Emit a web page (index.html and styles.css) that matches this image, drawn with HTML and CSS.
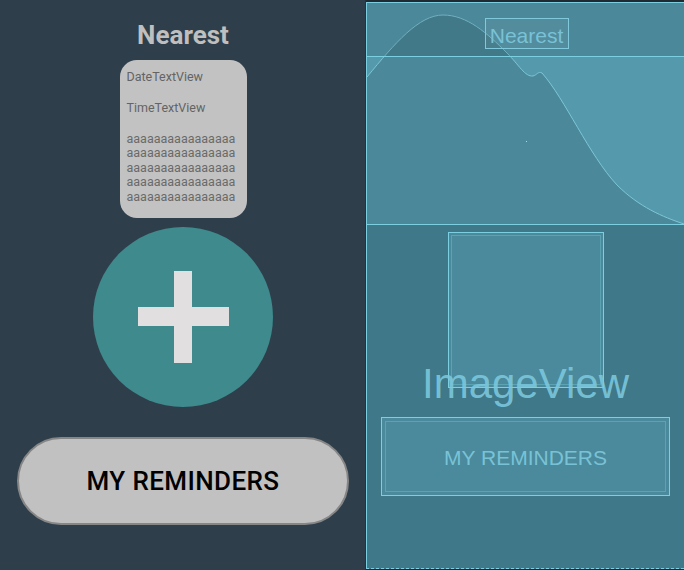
FILE: index.html
```html
<!DOCTYPE html>
<html lang="en">

<head>
  <meta charset="UTF-8">
  <meta name="viewport" content="width=device-width, initial-scale=1.0">
  <title>Nearest - layout preview</title>
  <link rel="stylesheet" href="styles.css">
</head>
<body>
  <div class="editor">

    <!-- design view -->
    <div class="design">
      <h1 class="title">Nearest</h1>
      <div class="card">
        <div class="card-line">DateTextView</div>
        <div class="card-line">TimeTextView</div>
        <div class="card-line card-body">aaaaaaaaaaaaaaaaaaaaaaaaaaaaaaaaaaaaaaaaaaaaaaaaaaaaaaaaaaaaaaaaaaaaaaaaaaaaaaaa</div>
      </div>
      <div class="fab">
        <svg width="180" height="180" viewBox="0 0 180 180">
          <rect x="45" y="80" width="91" height="19" fill="#e2dfe0" />
          <rect x="81" y="44" width="18" height="92" fill="#e2dfe0" />
        </svg>
      </div>
      <button class="reminders">MY REMINDERS</button>
    </div>

    <!-- blueprint view -->
    <div class="blueprint-wrap">
      <div class="blueprint">
        <div class="bp-top">
          <svg class="bp-curve" width="317" height="221" viewBox="0 0 317 221">
            <path d="M0,74 C28,40 52,12 76,12 C100,12 120,30 140,50 C152,62 158,74 166,73 C170,72 171,68 175,70 C198,96 222,152 250,182 C272,204 296,214 317,221 L0,221 Z"
              fill="rgba(0,0,0,0.11)" />
            <path d="M0,74 C28,40 52,12 76,12 C100,12 120,30 140,50 C152,62 158,74 166,73 C170,72 171,68 175,70 C198,96 222,152 250,182 C272,204 296,214 317,221"
              fill="none" stroke="#7cc6d8" stroke-width="1" />
          </svg>
          <div class="bp-band">
            <div class="bp-label">Nearest</div>
          </div>
          <span class="bp-dot"></span>
        </div>
        <div class="bp-bottom">
          <div class="bp-image"></div>
          <div class="bp-image-text">ImageView</div>
          <div class="bp-button">MY REMINDERS</div>
        </div>
      </div>
    </div>

  </div>
</body>
</html>
```

FILE: styles.css
```css
* {
  box-sizing: border-box;
}

body {
  margin: 0;
  background: #1f2a31;
}

.editor {
  display: flex;
  width: 684px;
  height: 570px;
  overflow: hidden;
}

/* design view */

.design {
  width: 366px;
  flex-shrink: 0;
  padding-left: 1px;
  background: #2e3e4b;
  border-right: 1px solid #26333d;
  display: flex;
  flex-direction: column;
  align-items: center;
  font-family: Roboto, "Liberation Sans", sans-serif;
}

.title {
  margin: 20px 0 0;
  font-size: 26px;
  line-height: 30px;
  font-weight: 700;
  color: #bfbfbf;
}

.card {
  margin-top: 10px;
  width: 127px;
  height: 158px;
  padding: 9.5px 7px 0;
  background: #c2c2c2;
  border-radius: 17px;
  color: #646464;
  font-size: 12.5px;
  line-height: 14.5px;
}

.card-line + .card-line {
  margin-top: 16.5px;
}

.card-body {
  width: 113px;
  word-break: break-all;
  color: #6a6a6a;
}

.fab {
  margin-top: 9px;
  width: 180px;
  height: 180px;
  border-radius: 50%;
  background: #3e8a8c;
}

.fab svg {
  display: block;
}

.reminders {
  margin-top: 30px;
  width: 332px;
  height: 88px;
  border: 2px solid #868686;
  border-radius: 44px;
  background: #c1c1c1;
  color: #000;
  font-family: Roboto, "Liberation Sans", sans-serif;
  font-size: 26px;
  font-weight: 500;
  letter-spacing: 0.4px;
  padding: 0;
}

/* blueprint view */

.blueprint-wrap {
  flex: 1;
  padding-top: 2px;
}

.blueprint {
  height: 567px;
  border-left: 1px solid #7ccfe0;
  border-top: 1px solid #7ccfe0;
  border-bottom: 1px dashed #7ccfe0;
  background: #3f7889;
  font-family: "Liberation Sans", Arial, sans-serif;
  color: #79c2d6;
}

.bp-top {
  position: relative;
  height: 222px;
  background: #5599ad;
  border-bottom: 1px solid #7ccfe0;
}

.bp-curve {
  position: absolute;
  left: 0;
  top: 0;
}

.bp-band {
  position: relative;
  height: 54px;
  background: rgba(0, 0, 0, 0.11);
  border-bottom: 1px solid #7ccfe0;
  display: flex;
  justify-content: center;
  padding: 15px 0 0 2px;
}

.bp-label {
  width: 84px;
  height: 31px;
  border: 1px solid #80c8dc;
  background: rgba(255, 255, 255, 0.04);
  font-size: 21px;
  line-height: 33px;
  text-align: center;
  overflow: hidden;
}

.bp-dot {
  position: absolute;
  left: 159px;
  top: 138px;
  width: 1px;
  height: 1px;
  background: #9fdcec;
}

.bp-bottom {
  display: flex;
  flex-direction: column;
  align-items: center;
  padding-top: 7px;
}

.bp-image {
  width: 156px;
  height: 156px;
  border: 1px solid #7ccfe0;
  outline: 1px solid rgba(124, 207, 224, 0.35);
  outline-offset: -4px;
  background: #4a8a9c;
}

.bp-image-text {
  margin-top: -26px;
  font-size: 42px;
  line-height: 43px;
  color: rgba(124, 200, 222, 0.9);
}

.bp-button {
  margin-top: 12px;
  width: 289px;
  height: 79px;
  border: 1px solid #7ccfe0;
  outline: 1px solid rgba(124, 207, 224, 0.35);
  outline-offset: -5px;
  background: #4a8a9c;
  display: flex;
  align-items: center;
  justify-content: center;
  font-size: 21px;
  padding-top: 2px;
}
```
